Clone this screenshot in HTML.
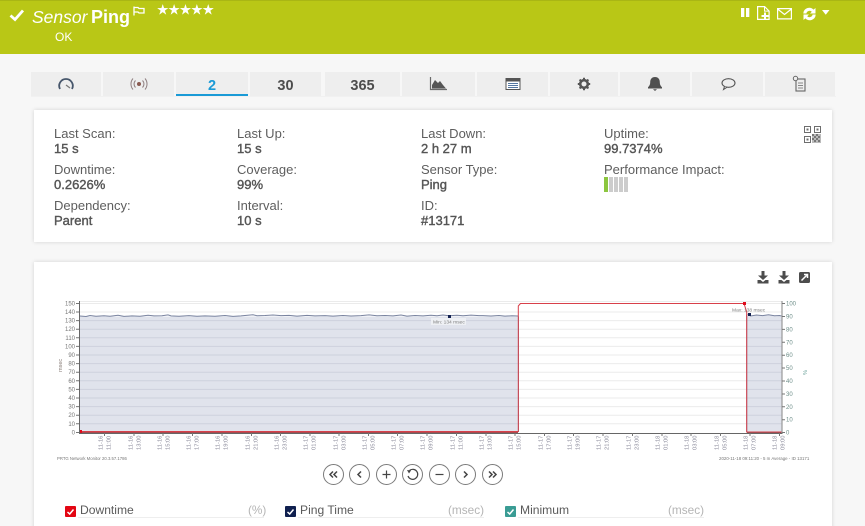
<!DOCTYPE html>
<html style="height:526px;overflow:hidden"><head><meta charset="utf-8"><style>
html,body{margin:0;padding:0}
body{width:865px;height:526px;overflow:hidden;background:#f7f7f7;position:relative;font-family:"Liberation Sans",sans-serif;color:#555}
.a{position:absolute;white-space:nowrap}
#hd{position:absolute;left:0;top:0;width:865px;height:54px;background:#b9c716;border-top:1px solid #a9b614;box-sizing:border-box}
.tab{position:absolute;top:72px;height:24px;background:#eee;text-align:center;font-weight:bold;font-size:14.5px;line-height:28px;color:#4d4d4d}
.tab svg{position:absolute;left:50%;top:5px;margin-left:-9px}
.card{position:absolute;left:34px;width:798px;background:#fff;box-shadow:0 0 4px rgba(0,0,0,.15)}
.l{position:absolute;font-size:13px;line-height:15px;color:#5e5e5e;white-space:nowrap}
.v{position:absolute;font-size:13px;line-height:15px;color:#555;white-space:nowrap;-webkit-text-stroke:.4px #555}
.btn{position:absolute;top:464px;width:19px;height:19px;border:1px solid #7a7a7a;border-radius:50%;background:#fff}
.btn svg{position:absolute;left:0;top:0}
.cb{position:absolute;top:506px;width:11px;height:11px;border-radius:1px}
.cb svg{position:absolute;left:0;top:0}
.lg{position:absolute;top:502px;font-size:12.1px;line-height:16px;color:#5a5a5a;white-space:nowrap}
.un{position:absolute;top:502px;font-size:11.8px;line-height:16px;color:#b5b5b5;white-space:nowrap}
.ln{position:absolute;top:517px;height:1px;background:#eee}
</style></head><body>
<div id="hd"></div>
<svg class="a" style="left:9px;top:8px" width="16" height="14" viewBox="0 0 16 14"><path d="M1.500 7.500L6 11.500L14 2.500" fill="none" stroke="#fff" stroke-width="2.800"/></svg>
<div class="a" style="left:32px;top:6px;font-size:17.500px;line-height:22px;font-style:italic;color:#fff">Sensor</div>
<div class="a" style="left:91px;top:6px;font-size:18px;line-height:22px;font-weight:bold;color:#fff">Ping</div>
<svg class="a" style="left:133px;top:6px" width="12" height="10" viewBox="0 0 12 10"><path d="M1 0.500V9.500M1 1.500H5L6 2.500H11V7H6L5 6H1" fill="none" stroke="#fff" stroke-width="1.300"/></svg>
<div class="a" style="left:157px;top:2px;font-size:12.800px;line-height:17px;color:#fff;letter-spacing:-.1px;font-family:'DejaVu Sans',sans-serif;-webkit-text-stroke:.4px #fff">★★★★★</div>
<div class="a" style="left:55px;top:30px;font-size:12px;line-height:15px;color:#fff">OK</div>
<svg class="a" style="left:735px;top:3px" width="100" height="20" viewBox="0 0 100 20">
<path d="M6 5h3.300v9H6zM11 5h3.300v9H11z" fill="#fff"/>
<path d="M22.600 3.600h7l4.500 4.500v8.300h-11.500z" fill="none" stroke="#fff" stroke-width="1.200"/>
<path d="M29.500 3.600v4.500h4.500" fill="none" stroke="#fff"/>
<path d="M30 9.500v7M26.500 13h7" stroke="#fff" stroke-width="2"/>
<path d="M42.600 5.600h13.800v10.300h-13.800z M42.600 6l6.900 5.500l6.900-5.500" fill="none" stroke="#fff" stroke-width="1.200"/>
<path d="M68.300 10.500a6 6 0 0 1 10.300-3.900l1.900-1.600v5.500h-5.500l1.800-1.800a3.200 3.200 0 0 0-5.400 1.800z" fill="#fff"/>
<path d="M80.700 11.500a6 6 0 0 1-10.300 3.900l-1.900 1.600v-5.500h5.500l-1.800 1.800a3.200 3.200 0 0 0 5.400-1.800z" fill="#fff"/>
<path d="M87 7h7.500l-3.750 4.800z" fill="#fff"/>
</svg>

<div class="tab" style="left:31px;width:70px"><svg width="18" height="14" viewBox="0 0 18 14"><path d="M3 12a6.800 6.800 0 1 1 12 0" fill="none" stroke="#46566b" stroke-width="1.800"/><path d="M9 8l4 3" stroke="#777" stroke-width="1.200"/></svg></div>
<div class="tab" style="left:103px;width:71px"><svg width="18" height="14" viewBox="0 0 18 14"><circle cx="9" cy="7" r="2" fill="#8a5a50"/><path d="M5.500 3.500a5 5 0 0 0 0 7M12.500 3.500a5 5 0 0 1 0 7M3 1.500a8.500 8.500 0 0 0 0 11M15 1.500a8.500 8.500 0 0 1 0 11" fill="none" stroke="#8f7f80" stroke-width="1"/></svg></div>
<div class="tab" style="left:176px;width:72px;height:22px;color:#1a9ad6;border-bottom:2px solid #1a9ad6">2</div>
<div class="tab" style="left:250px;width:71px">30</div>
<div class="tab" style="left:325px;width:75px">365</div>
<div class="tab" style="left:402px;width:73px"><svg width="18" height="14" viewBox="0 0 18 14" style="margin-left:-10px"><path d="M1.500 0v12.500H18" fill="none" stroke="#6a6a6a" stroke-width="1.200"/><path d="M3 11.500V8l3-5 3 3 2-2 3 4 3 3.500z" fill="#555"/></svg></div>
<div class="tab" style="left:477px;width:71px"><svg width="18" height="14" viewBox="0 0 18 14"><rect x="2" y="1.500" width="14" height="11" fill="#fff" stroke="#555" stroke-width="1"/><path d="M2 2h14v2.500H2z" fill="#555"/><path d="M4 6.500h10M4 8.500h10M4 10.500h10" stroke="#5577a0" stroke-width="1"/></svg></div>
<div class="tab" style="left:550px;width:68px"><svg width="18" height="14" viewBox="0 0 18 14"><circle cx="9" cy="7" r="3.800" fill="none" stroke="#555" stroke-width="2.600"/><path d="M9 0.800v2M9 11.200v2M2.800 7h2M13.200 7h2M4.600 2.600l1.400 1.400M12 10l1.400 1.400M4.600 11.400l1.400-1.400M12 4l1.400-1.400" stroke="#555" stroke-width="2"/></svg></div>
<div class="tab" style="left:620px;width:70px"><svg width="18" height="14" viewBox="0 0 18 14"><path d="M9 0c3.200 0 4.800 2.200 4.800 5.200 0 2.500 1 3.800 2.200 5v1.300H2v-1.300c1.200-1.200 2.200-2.500 2.200-5C4.200 2.200 5.800 0 9 0z" fill="#4f4f4f"/><path d="M7 12.200h4l-2 1.800z" fill="#4f4f4f"/></svg></div>
<div class="tab" style="left:692px;width:71px"><svg width="18" height="14" viewBox="0 0 18 14"><ellipse cx="9.500" cy="6" rx="6.500" ry="4.300" fill="none" stroke="#555" stroke-width="1.100"/><path d="M5.500 9.500L4.500 12.500L8 10.200" fill="#eee" stroke="#555" stroke-width="1"/></svg></div>
<div class="tab" style="left:765px;width:70px"><svg width="18" height="14" viewBox="0 0 18 14" style="top:5px;overflow:visible"><rect x="5" y="2" width="9" height="12" fill="none" stroke="#666" stroke-width="1.100"/><path d="M7 6h5M7 8.500h5M7 11h5" stroke="#888"/><circle cx="4.500" cy="1.500" r="2.200" fill="#eee" stroke="#666"/></svg></div>
<div class="a" style="left:31px;top:96px;width:805px;height:1px;background:#f1f1f1"></div>

<div class="card" style="top:110px;height:132px"></div>
<div class="l" style="left:54px;top:126px">Last Scan:</div><div class="v" style="left:54px;top:141px">15 s</div>
<div class="l" style="left:54px;top:162px">Downtime:</div><div class="v" style="left:54px;top:177px">0.2626%</div>
<div class="l" style="left:54px;top:198px">Dependency:</div><div class="v" style="left:54px;top:213px">Parent</div>
<div class="l" style="left:237px;top:126px">Last Up:</div><div class="v" style="left:237px;top:141px">15 s</div>
<div class="l" style="left:237px;top:162px">Coverage:</div><div class="v" style="left:237px;top:177px">99%</div>
<div class="l" style="left:237px;top:198px">Interval:</div><div class="v" style="left:237px;top:213px">10 s</div>
<div class="l" style="left:421px;top:126px">Last Down:</div><div class="v" style="left:421px;top:141px">2 h 27 m</div>
<div class="l" style="left:421px;top:162px">Sensor Type:</div><div class="v" style="left:421px;top:177px">Ping</div>
<div class="l" style="left:421px;top:198px">ID:</div><div class="v" style="left:421px;top:213px">#13171</div>
<div class="l" style="left:604px;top:126px">Uptime:</div><div class="v" style="left:604px;top:141px">99.7374%</div>
<div class="l" style="left:604px;top:162px">Performance Impact:</div>
<svg class="a" style="left:604px;top:177px" width="25" height="15"><rect width="4" height="15" fill="#8cc63f"/><rect x="5" width="4" height="15" fill="#ccc"/><rect x="10" width="4" height="15" fill="#ccc"/><rect x="15" width="4" height="15" fill="#ccc"/><rect x="20" width="4" height="15" fill="#ccc"/></svg>
<svg class="a" style="left:804px;top:126px" width="17" height="17" viewBox="0 0 17 17"><g fill="none" stroke="#6d6d6d" stroke-width="1"><rect x=".5" y=".5" width="6" height="6"/><rect x="10.500" y=".5" width="6" height="6"/><rect x=".5" y="10.500" width="6" height="6"/></g><g fill="#6d6d6d"><rect x="2.500" y="2.500" width="2" height="2"/><rect x="12.500" y="2.500" width="2" height="2"/><rect x="2.500" y="12.500" width="2" height="2"/></g><path d="M8 8h9v9H8z" fill="#bbb"/><path d="M8 8h2v2H8zM12 8h2v2h-2zM10 10h2v2h-2zM14 10h2v2h-2zM8 12h2v2H8zM12 12h2v2h-2zM10 14h2v2h-2zM14 14h2v2h-2z" fill="#777"/></svg>

<div class="card" style="top:262px;height:270px"></div>
<svg class="a" style="left:755px;top:269px" width="60" height="18" viewBox="0 0 60 18">
<g fill="#4d4d4d"><path d="M6.500 2h3v4.500H13L8 11 3 6.500h3.500zM2.500 11h3l2.500 2 2.500-2h3v3.500h-11z"/><path transform="translate(21 0)" d="M6.500 2h3v4.500H13L8 11 3 6.500h3.500zM2.500 11h3l2.500 2 2.500-2h3v3.500h-11z"/><rect x="44" y="3" width="11" height="11" rx="1.500"/></g>
<path d="M46.500 11.500L52 6M49 5.500h3.500V9" fill="none" stroke="#fff" stroke-width="1.500"/></svg>

<svg class="a" style="left:50px;top:295px" width="770" height="170" viewBox="50 295 770 170" font-family="Liberation Sans,sans-serif" font-size="6" fill="#7f7f7f">
<g stroke="#ebebeb" stroke-width="1"><path d="M80 301.500H782M80 303.500H782M80 312H782M80 320.600H782M80 329.200H782M80 337.800H782M80 346.400H782M80 355H782M80 363.600H782M80 372.200H782M80 380.800H782M80 389.400H782M80 398H782M80 406.600H782M80 415.200H782M80 423.800H782"/></g>
<rect x="80" y="316.500" width="438.500" height="116" fill="#e0e3ec"/>
<rect x="746.500" y="315.500" width="35.500" height="117" fill="#e0e3ec"/>
<g stroke="#cdd1dd" stroke-width="1"><path d="M80 320.600H518M80 329.200H518M80 337.800H518M80 346.400H518M80 355H518M80 363.600H518M80 372.200H518M80 380.800H518M80 389.400H518M80 398H518M80 406.600H518M80 415.200H518M80 423.800H518M747 320.600H782M747 329.200H782M747 337.800H782M747 346.400H782M747 355H782M747 363.600H782M747 372.200H782M747 380.800H782M747 389.400H782M747 398H782M747 406.600H782M747 415.200H782M747 423.800H782"/></g>
<path d="M80 316l6 .5 4-1 6 .8 8-.6 6 .5 8-1 6 1.200 8-.5 8 .3 8-.9 6 .6 8-.2 6-.8 3 1 8 .4 10-.7 8 .6 8-.3 10 .4 10-.8 8 .9 8-.5 8-.8 4-.3 4 .9 8-.2 8-.5 8 .6 8-.2 8 .7 10-.7 8 .5 10-.3 8 .5 10-.6 8 .5 10-.4 8-.7 8 .8 8-.2 8 .4 8-.9 6 1.100 8-.6 8 .4 8-.7 6 .6 6-.8 6 .7 8-.4 6 .4 8-.6 8 .5 4 0 8 .4 8-.5 6 .6 7-.3 6 .2" fill="none" stroke="#7a84a0" stroke-width="1"/>
<path d="M747.500 314l3 2 6-1 6 .6 6-.9 6 1 5-.2 3 .7" fill="none" stroke="#7a84a0" stroke-width="1"/>
<path d="M518.500 316.500V432M746.700 315V432" stroke="#7b84a0" stroke-width="1"/>
<path d="M80 431.500H518.300V306L520.500 303.500H744L746.700 312V432H782" fill="none" stroke="#d8404a" stroke-width="1"/>
<path d="M80 432.500H518M747 432.500H782" stroke="#a84a50" stroke-width="1"/>
<rect x="79" y="430" width="3" height="3" fill="#e00b1c"/><rect x="743" y="302" width="3" height="3" fill="#e00b1c"/><rect x="748" y="313" width="3" height="3" fill="#12204f"/><rect x="448" y="315" width="3" height="3" fill="#12204f"/>
<rect x="431" y="318" width="35" height="7" fill="#eef0f4"/>
<text x="433" y="323.500" font-size="4.900">Min: 134 msec</text>
<text x="732" y="311.500" font-size="4.900">Max: 138 msec</text>
<path d="M79.500 301V433.500H782.500" fill="none" stroke="#666" stroke-width="1"/>
<path d="M782 301V433" stroke="#999" stroke-width="1.200"/>
<g stroke="#777" stroke-width="1"><path d="M76 303.500h3M76 312h3M76 320.600h3M76 329.200h3M76 337.800h3M76 346.400h3M76 355h3M76 363.600h3M76 372.200h3M76 380.800h3M76 389.400h3M76 398h3M76 406.600h3M76 415.200h3M76 423.800h3M76 432.500h3M782 303.500h3M782 316.500h3M782 329.400h3M782 342.300h3M782 355.200h3M782 368h3M782 381h3M782 394h3M782 406.800h3M782 419.700h3M782 432.500h3"/></g>
<g text-anchor="end" fill="#777"><text x="75" y="305.500">150</text><text x="75" y="314">140</text><text x="75" y="322.600">130</text><text x="75" y="331.200">120</text><text x="75" y="339.800">110</text><text x="75" y="348.400">100</text><text x="75" y="357">90</text><text x="75" y="365.600">80</text><text x="75" y="374.200">70</text><text x="75" y="382.800">60</text><text x="75" y="391.400">50</text><text x="75" y="400">40</text><text x="75" y="408.600">30</text><text x="75" y="417.200">20</text><text x="75" y="425.800">10</text><text x="75" y="434.500">0</text></g>
<g fill="#6f8f8a"><text x="786" y="305.500">100</text><text x="786" y="318.500">90</text><text x="786" y="331.400">80</text><text x="786" y="344.300">70</text><text x="786" y="357.200">60</text><text x="786" y="370">50</text><text x="786" y="383">40</text><text x="786" y="396">30</text><text x="786" y="408.800">20</text><text x="786" y="421.700">10</text><text x="786" y="434.500">0</text></g>
<text transform="translate(62,372) rotate(-90)" font-size="5.500" fill="#8a7f7a">msec</text>
<text transform="translate(803,370) rotate(90)" font-size="5.500" fill="#5f9a92">%</text>
<g stroke="#777" stroke-width="1"><path d="M104.500 433v3M134 433v3M163 433v3M192.500 433v3M222 433v3M251.500 433v3M280.500 433v3M310 433v3M339 433v3M368.500 433v3M397.500 433v3M427 433v3M456.500 433v3M486 433v3M515 433v3M544.500 433v3M573.500 433v3M603 433v3M632.500 433v3M662 433v3M691 433v3M720.500 433v3M750 433v3M779.500 433v3"/></g>
<g font-size="5.800" fill="#8a8a9a" transform="translate(-.7 0)">
<text transform="translate(103,450) rotate(-90)">11-16</text><text transform="translate(111,450) rotate(-90)">11:00</text>
<text transform="translate(133,450) rotate(-90)">11-16</text><text transform="translate(141,450) rotate(-90)">13:00</text>
<text transform="translate(162,450) rotate(-90)">11-16</text><text transform="translate(170,450) rotate(-90)">15:00</text>
<text transform="translate(191,450) rotate(-90)">11-16</text><text transform="translate(199,450) rotate(-90)">17:00</text>
<text transform="translate(220,450) rotate(-90)">11-16</text><text transform="translate(228,450) rotate(-90)">19:00</text>
<text transform="translate(250,450) rotate(-90)">11-16</text><text transform="translate(258,450) rotate(-90)">21:00</text>
<text transform="translate(279,450) rotate(-90)">11-16</text><text transform="translate(287,450) rotate(-90)">23:00</text>
<text transform="translate(308,450) rotate(-90)">11-17</text><text transform="translate(316,450) rotate(-90)">01:00</text>
<text transform="translate(338,450) rotate(-90)">11-17</text><text transform="translate(346,450) rotate(-90)">03:00</text>
<text transform="translate(367,450) rotate(-90)">11-17</text><text transform="translate(375,450) rotate(-90)">05:00</text>
<text transform="translate(396,450) rotate(-90)">11-17</text><text transform="translate(404,450) rotate(-90)">07:00</text>
<text transform="translate(425,450) rotate(-90)">11-17</text><text transform="translate(433,450) rotate(-90)">09:00</text>
<text transform="translate(455,450) rotate(-90)">11-17</text><text transform="translate(463,450) rotate(-90)">11:00</text>
<text transform="translate(484,450) rotate(-90)">11-17</text><text transform="translate(492,450) rotate(-90)">13:00</text>
<text transform="translate(513,450) rotate(-90)">11-17</text><text transform="translate(521,450) rotate(-90)">15:00</text>
<text transform="translate(543,450) rotate(-90)">11-17</text><text transform="translate(551,450) rotate(-90)">17:00</text>
<text transform="translate(572,450) rotate(-90)">11-17</text><text transform="translate(580,450) rotate(-90)">19:00</text>
<text transform="translate(601,450) rotate(-90)">11-17</text><text transform="translate(609,450) rotate(-90)">21:00</text>
<text transform="translate(631,450) rotate(-90)">11-17</text><text transform="translate(639,450) rotate(-90)">23:00</text>
<text transform="translate(660,450) rotate(-90)">11-18</text><text transform="translate(668,450) rotate(-90)">01:00</text>
<text transform="translate(689,450) rotate(-90)">11-18</text><text transform="translate(697,450) rotate(-90)">03:00</text>
<text transform="translate(719,450) rotate(-90)">11-18</text><text transform="translate(727,450) rotate(-90)">05:00</text>
<text transform="translate(748,450) rotate(-90)">11-18</text><text transform="translate(756,450) rotate(-90)">07:00</text>
<text transform="translate(777,450) rotate(-90)">11-18</text><text transform="translate(785,450) rotate(-90)">09:00</text>
</g>
<text x="57" y="460" font-size="4.250" fill="#777">PRTG Network Monitor 20.3.57.1786</text>
<text x="719" y="460" font-size="4.400" fill="#777">2020-11-18 09:11:20 - 5 m Average - ID 13171</text>
</svg>

<div class="btn" style="left:323px"><svg width="19" height="19" viewBox="0 0 19 19"><path d="M9 6.500L6 9.500L9 12.500M13 6.500L10 9.500L13 12.500" fill="none" stroke="#444" stroke-width="1.500"/></svg></div>
<div class="btn" style="left:349px"><svg width="19" height="19" viewBox="0 0 19 19"><path d="M11 6.500L8 9.500L11 12.500" fill="none" stroke="#444" stroke-width="1.500"/></svg></div>
<div class="btn" style="left:376px"><svg width="19" height="19" viewBox="0 0 19 19"><path d="M9.500 5.500v8M5.500 9.500h8" fill="none" stroke="#444" stroke-width="1.200"/></svg></div>
<div class="btn" style="left:402px"><svg width="19" height="19" viewBox="0 0 19 19"><path d="M6.500 5.500A5 5 0 1 1 5 11" fill="none" stroke="#444" stroke-width="1.200"/><path d="M4 5l4 .5-2 3z" fill="#444"/></svg></div>
<div class="btn" style="left:429px"><svg width="19" height="19" viewBox="0 0 19 19"><path d="M5.500 9.500h8" fill="none" stroke="#444" stroke-width="1.200"/></svg></div>
<div class="btn" style="left:455px"><svg width="19" height="19" viewBox="0 0 19 19"><path d="M8 6.500L11 9.500L8 12.500" fill="none" stroke="#444" stroke-width="1.500"/></svg></div>
<div class="btn" style="left:482px"><svg width="19" height="19" viewBox="0 0 19 19"><path d="M6 6.500L9 9.500L6 12.500M10 6.500L13 9.500L10 12.500" fill="none" stroke="#444" stroke-width="1.500"/></svg></div>

<div class="cb" style="left:65px;background:#e30613"><svg width="11" height="11"><path d="M2.500 6L4.700 8L8.500 3.500" fill="none" stroke="#fff" stroke-width="1.500"/></svg></div>
<div class="lg" style="left:80px">Downtime</div><div class="un" style="left:248px">(%)</div>
<div class="ln" style="left:78px;width:186px"></div>
<div class="cb" style="left:285px;background:#10204f"><svg width="11" height="11"><path d="M2.500 6L4.700 8L8.500 3.500" fill="none" stroke="#fff" stroke-width="1.500"/></svg></div>
<div class="lg" style="left:300px">Ping Time</div><div class="un" style="left:448px">(msec)</div>
<div class="ln" style="left:298px;width:186px"></div>
<div class="cb" style="left:505px;background:#3a9c94"><svg width="11" height="11"><path d="M2.500 6L4.700 8L8.500 3.500" fill="none" stroke="#fff" stroke-width="1.500"/></svg></div>
<div class="lg" style="left:520px">Minimum</div><div class="un" style="left:668px">(msec)</div>
<div class="ln" style="left:518px;width:186px"></div>
</body></html>
